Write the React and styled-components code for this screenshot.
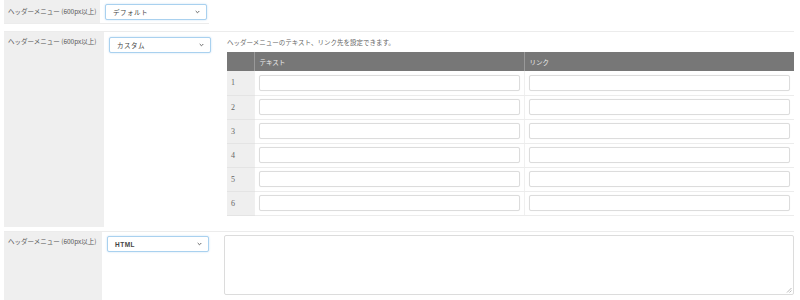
import React from "react";
import styled, { createGlobalStyle } from "styled-components";

const Global = createGlobalStyle`
  html, body { margin: 0; padding: 0; background: #fff; }
  body {
    font-family: "Noto Sans CJK JP", "Noto Sans", sans-serif;
    color: #555;
    width: 800px;
    height: 300px;
    overflow: hidden;
  }
`;

const Page = styled.div`
  padding: 0 6px 0 4px;
  display: flex;
  flex-direction: column;
`;

const Section = styled.div`
  display: flex;
  align-items: stretch;
  width: ${(p) => (p.$narrow ? "205px" : "auto")};
  border-top: ${(p) => (p.$top ? "1px solid #ececec" : "none")};
  border-bottom: ${(p) => (p.$bottom ? "1px solid #ececec" : "none")};
  margin-top: ${(p) => p.$mt || 0}px;
  height: ${(p) => p.$h}px;
  box-sizing: border-box;
`;

const Label = styled.div`
  width: ${(p) => p.$w}px;
  flex: none;
  background: #efefef;
  font-size: 6.5px;
  line-height: 10px;
  color: #555;
  padding: ${(p) => p.$pt}px 0 0 4px;
  box-sizing: border-box;
  white-space: nowrap;
`;

const Content = styled.div`
  flex: 1;
  display: flex;
  align-items: flex-start;
  gap: ${(p) => p.$gap}px;
  padding: ${(p) => p.$pt}px 0 0 5px;
  min-width: 0;
`;

const SelectBox = styled.div`
  position: relative;
  flex: none;
  width: 102px;
  height: 16px;
  box-sizing: border-box;
  border: 1px solid #a9d1ef;
  border-radius: 2px;
  box-shadow: 0 0 2px rgba(120, 180, 230, 0.45);
  background: #fff;
  display: flex;
  align-items: center;
  padding-left: 7px;
  font-size: 6.5px;
  letter-spacing: 0.5px;
  color: #444;
  font-family: ${(p) => (p.$latin ? '"Liberation Sans", sans-serif' : "inherit")};
  font-weight: ${(p) => (p.$latin ? 600 : 400)};
`;

const Chevron = styled.svg`
  position: absolute;
  right: 6px;
  top: 5px;
`;

const Select = ({ children, latin }) => (
  <SelectBox $latin={latin}>
    {children}
    <Chevron width="5" height="4" viewBox="0 0 5 4">
      <path d="M0.7 1 L2.5 2.8 L4.3 1" fill="none" stroke="#666" strokeWidth="1" />
    </Chevron>
  </SelectBox>
);

const Right = styled.div`
  flex: 1;
  display: flex;
  flex-direction: column;
  min-width: 0;
`;

const Desc = styled.div`
  font-size: 6.5px;
  line-height: 10px;
  color: #666;
  margin-bottom: 5px;
`;

const Table = styled.table`
  width: 567px;
  border-collapse: collapse;
  table-layout: fixed;
`;

const Th = styled.th`
  background: #777;
  color: #eee;
  font-weight: 400;
  font-size: 6.5px;
  text-align: left;
  height: 19px;
  padding: 0 0 0 5px;
  border-left: 1px solid #999;
  &:first-child { border-left: none; }
`;

const NumTd = styled.td`
  background: #efefef;
  font-family: "Liberation Serif", serif;
  font-size: 8px;
  color: #666;
  padding: 0 0 0 4px;
  height: 24px;
  box-sizing: border-box;
  border-bottom: 1px solid #e4e4e4;
`;

const Td = styled.td`
  padding: 0 4px 0 4px;
  border-left: 1px solid #f0f0f0;
  border-bottom: 1px solid #ececec;
  height: 24px;
  box-sizing: border-box;
`;

const Input = styled.div`
  height: 16px;
  box-sizing: border-box;
  border: 1px solid #dcdcdc;
  border-radius: 2px;
  background: #fff;
  box-shadow: 0 0 1px rgba(0, 0, 0, 0.08);
`;

const TextArea = styled.div`
  position: relative;
  flex: 1;
  height: 60px;
  margin-top: -1px;
  box-sizing: border-box;
  border: 1px solid #dcdcdc;
  border-radius: 2px;
  background: #fff;
`;

const Grip = styled.svg`
  position: absolute;
  right: 1px;
  bottom: 1px;
`;

export default function App() {
  const rows = [1, 2, 3, 4, 5, 6];
  return (
    <>
      <Global />
      <Page>
        <Section $narrow $bottom $h={24}>
          <Label $w={96} $pt={6}>ヘッダーメニュー (600px以上)</Label>
          <Content $pt={4} $gap={0}>
            <Select>デフォルト</Select>
          </Content>
        </Section>

        <Section $top $mt={7} $h={196}>
          <Label $w={100} $pt={4}>ヘッダーメニュー (600px以上)</Label>
          <Content $pt={5} $gap={16}>
            <Select>カスタム</Select>
            <Right>
              <Desc>ヘッダーメニューのテキスト、リンク先を設定できます。</Desc>
              <Table>
                <colgroup>
                  <col style={{ width: 27 }} />
                  <col style={{ width: 270 }} />
                  <col style={{ width: 270 }} />
                </colgroup>
                <thead>
                  <tr>
                    <Th></Th>
                    <Th>テキスト</Th>
                    <Th>リンク</Th>
                  </tr>
                </thead>
                <tbody>
                  {rows.map((n) => (
                    <tr key={n}>
                      <NumTd>{n}</NumTd>
                      <Td><Input /></Td>
                      <Td><Input /></Td>
                    </tr>
                  ))}
                </tbody>
              </Table>
            </Right>
          </Content>
        </Section>

        <Section $top $mt={4} $h={70}>
          <Label $w={98} $pt={4}>ヘッダーメニュー (600px以上)</Label>
          <Content $pt={4} $gap={15}>
            <Select latin>HTML</Select>
            <TextArea>
              <Grip width="6" height="6" viewBox="0 0 6 6">
                <path d="M5.5 1 L1 5.5 M5.5 3.5 L3.5 5.5" stroke="#aaa" strokeWidth="0.8" />
              </Grip>
            </TextArea>
          </Content>
        </Section>
      </Page>
    </>
  );
}
